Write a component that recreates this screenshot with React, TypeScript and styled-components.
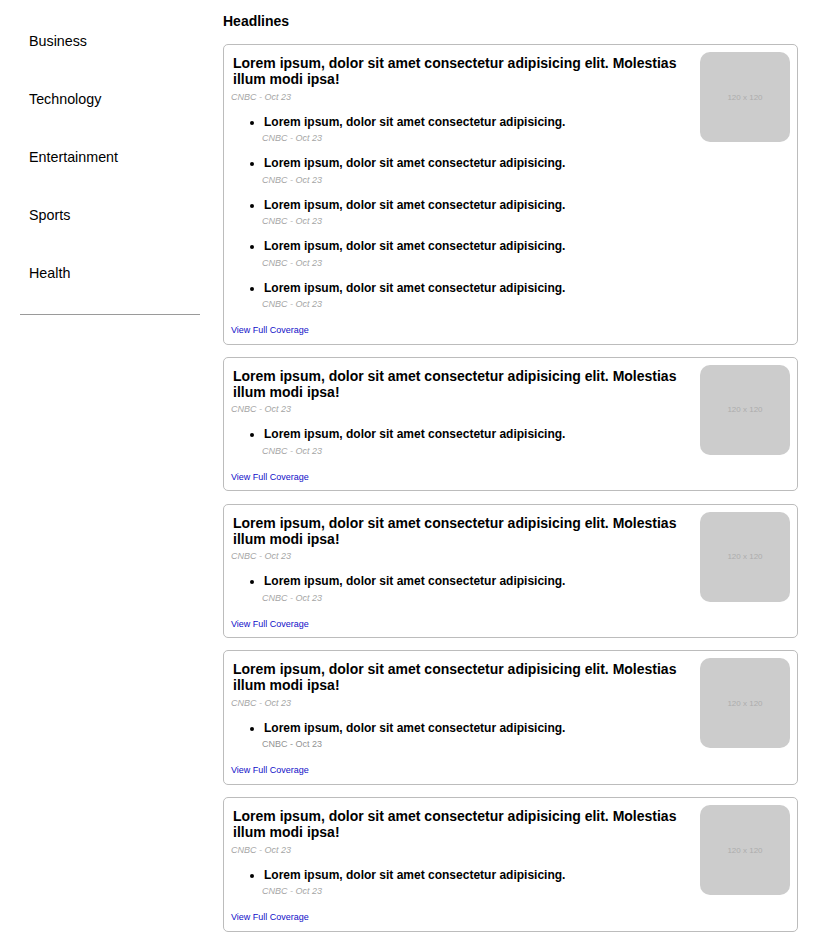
import React from "react";
import styled, { createGlobalStyle } from "styled-components";

const GlobalStyle = createGlobalStyle`
  html, body {
    margin: 0;
    padding: 0;
    background: #ffffff;
    font-family: "Liberation Sans", Arial, Helvetica, sans-serif;
    color: #000;
  }
  * { box-sizing: border-box; }
`;

const Page = styled.div`
  display: flex;
  align-items: flex-start;
  gap: 23px;
  padding: 0 22px 0 20px;
`;

const Sidebar = styled.nav`
  width: 180px;
  flex: none;
  padding-top: 12px;
`;

const NavList = styled.ul`
  list-style: none;
  margin: 0;
  padding: 0;
`;

const NavItem = styled.li`
  padding: 21px 9px;
  font-size: 14.3px;
  line-height: 16px;
  color: #000;
`;

const Divider = styled.hr`
  margin: 12px 0 0;
  border: 0;
  border-top: 1px solid #9a9a9a;
  height: 0;
`;

const Main = styled.main`
  flex: 1;
  min-width: 0;
  padding-top: 13px;
  padding-bottom: 11px;
`;

const Heading = styled.h2`
  margin: 0 0 15px;
  font-size: 14px;
  line-height: 16px;
  font-weight: bold;
`;

const CardList = styled.div`
  display: flex;
  flex-direction: column;
  gap: 12.25px;
`;

const Card = styled.article`
  display: flex;
  align-items: flex-start;
  gap: 10px;
  border: 1px solid #bcbcbc;
  border-radius: 5px;
  padding: 7px 7px 7.5px 7px;
`;

const Content = styled.div`
  flex: 1;
  min-width: 0;
`;

const Title = styled.h3`
  margin: 3px 0 0;
  padding-left: 2px;
  padding-right: 12px;
  font-size: 14px;
  line-height: 16px;
  font-weight: bold;
`;

const Meta = styled.div<{ $plain?: boolean }>`
  font-size: 9px;
  line-height: 11px;
  font-style: ${(p) => (p.$plain ? "normal" : "italic")};
  color: ${(p) => (p.$plain ? "#939393" : "#a6a6a6")};
`;

const TopMeta = styled(Meta)`
  margin-top: 4.5px;
`;

const SubList = styled.ul`
  margin: 12px 0 0;
  padding-left: 33px;
  list-style: disc;
  font-size: 12px;
  line-height: 14px;
`;

const SubItem = styled.li`
  font-size: 12px;
  line-height: 14px;
  & + & {
    margin-top: 12px;
  }
`;

const SubTitle = styled.div`
  font-size: 12px;
  line-height: 14px;
  font-weight: bold;
`;

const SubMeta = styled(Meta)`
  margin-top: 4.5px;
  margin-left: -2px;
`;

const Coverage = styled.a`
  display: block;
  margin-top: 15px;
  font-size: 9px;
  line-height: 11px;
  color: #1010c8;
  text-decoration: none;
`;

const Thumb = styled.div`
  flex: none;
  width: 90px;
  height: 90px;
  border-radius: 10px;
  background: #cccccc;
  color: #adadad;
  font-size: 8px;
  display: flex;
  align-items: center;
  justify-content: center;
`;

const TITLE =
  "Lorem ipsum, dolor sit amet consectetur adipisicing elit. Molestias illum modi ipsa!";
const SUB = "Lorem ipsum, dolor sit amet consectetur adipisicing.";
const SOURCE = "CNBC - Oct 23";

const categories = ["Business", "Technology", "Entertainment", "Sports", "Health"];

const cards = [
  { items: 5, plain: false },
  { items: 1, plain: false },
  { items: 1, plain: false },
  { items: 1, plain: true },
  { items: 1, plain: false },
];

export default function App() {
  return (
    <>
      <GlobalStyle />
      <Page>
        <Sidebar>
          <NavList>
            {categories.map((c) => (
              <NavItem key={c}>{c}</NavItem>
            ))}
          </NavList>
          <Divider />
        </Sidebar>
        <Main>
          <Heading>Headlines</Heading>
          <CardList>
            {cards.map((card, i) => (
              <Card key={i}>
                <Content>
                  <Title>{TITLE}</Title>
                  <TopMeta>{SOURCE}</TopMeta>
                  <SubList>
                    {Array.from({ length: card.items }).map((_, j) => (
                      <SubItem key={j}>
                        <SubTitle>{SUB}</SubTitle>
                        <SubMeta $plain={card.plain}>{SOURCE}</SubMeta>
                      </SubItem>
                    ))}
                  </SubList>
                  <Coverage href="#">View Full Coverage</Coverage>
                </Content>
                <Thumb>120 x 120</Thumb>
              </Card>
            ))}
          </CardList>
        </Main>
      </Page>
    </>
  );
}
